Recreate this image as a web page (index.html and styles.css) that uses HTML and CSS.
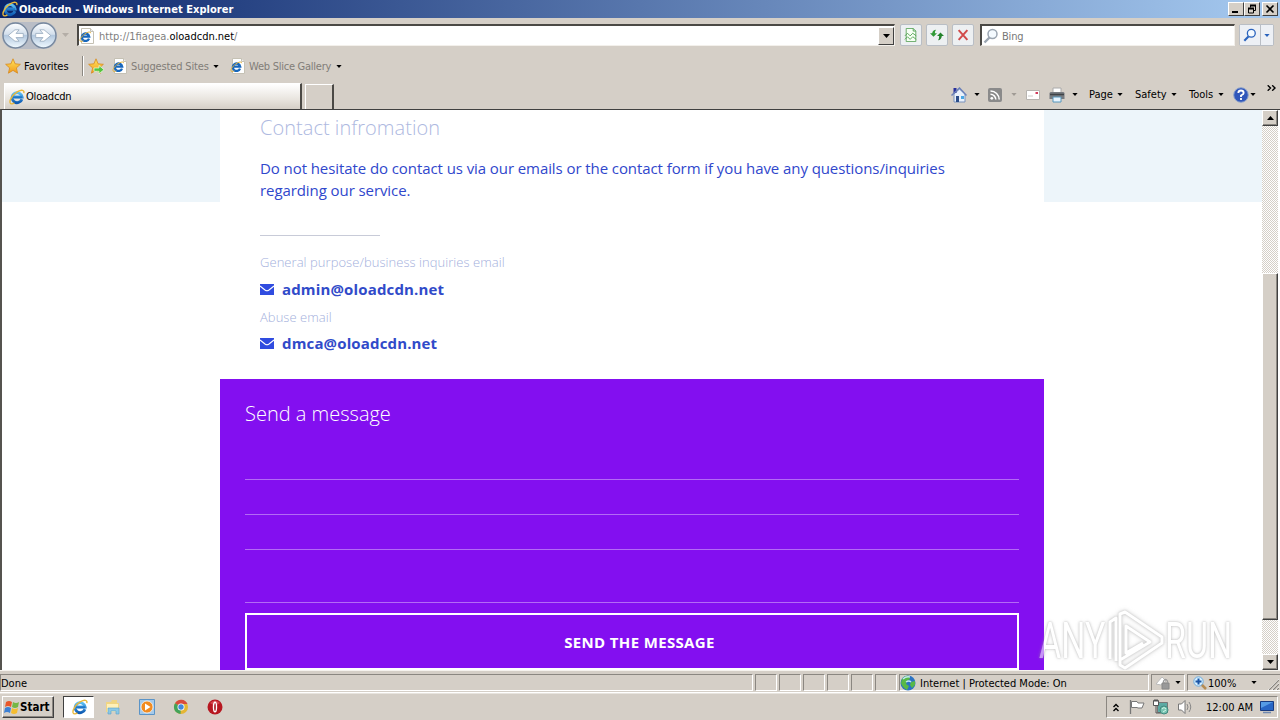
FILE: index.html
```
<!DOCTYPE html>
<html lang="en">
<head>
    <meta charset="UTF-8">
    <meta name="viewport" content="width=device-width, initial-scale=1.0">
    <title>Oloadcdn - Windows Internet Explorer</title>
    <link rel="stylesheet" href="styles.css">
</head>
<body>

    <!-- Shared icons -->
    <svg class="defs">
        <defs>
            <linearGradient id="gBlue" x1="0" y1="0" x2="0" y2="1">
                <stop offset="0" stop-color="#5cc0f5"/>
                <stop offset="1" stop-color="#0f5cb4"/>
            </linearGradient>
            <linearGradient id="gStar" x1="0" y1="0" x2="0" y2="1">
                <stop offset="0" stop-color="#ffe45c"/>
                <stop offset="1" stop-color="#f29a1c"/>
            </linearGradient>
            <linearGradient id="gBall" x1="0" y1="0" x2="0" y2="1">
                <stop offset="0" stop-color="#fdfeff"/>
                <stop offset="0.45" stop-color="#d3dfec"/>
                <stop offset="0.5" stop-color="#b3c8df"/>
                <stop offset="1" stop-color="#f1faff"/>
            </linearGradient>
            <symbol id="ie" viewBox="0 0 16 16">
                <path d="M12.9 10.2a5 5 0 1 1 .2-2.2H5.2" fill="none" stroke="url(#gBlue)" stroke-width="2.9"/>
                <path d="M4 8.3h9" stroke="#1d76c8" stroke-width="1.8"/>
                <path d="M14.8 4.2C15.6.9 12.6.3 8.6 2.7 3.6 5.6.1 11.2 1.2 14c.7 1.5 2.6.9 4.2-.2" fill="none" stroke="#e9b83a" stroke-width="1.4"/>
            </symbol>
            <symbol id="iepage" viewBox="0 0 16 16">
                <path d="M2.500.5h9l3 3v12h-12z" fill="#fff" stroke="#c5c1b4"/>
                <path d="M11.500.5v3h3" fill="#eee" stroke="#c5c1b4"/>
                <path d="M10 10.600a3.700 3.700 0 1 1 .2-2H4" fill="none" stroke="#1767bd" stroke-width="2.300"/>
                <path d="M11.700 5.200c0-2-3-1.400-6 .8C2 8.700.3 12 1.300 13.200c.6.8 1.800.3 3-.4" fill="none" stroke="#e2b13c"/>
            </symbol>
            <symbol id="star" viewBox="0 0 16 16">
                <path d="M8 .8l2.100 5 5.300.5-4 3.600 1.200 5.300L8 12.400l-4.600 2.800 1.200-5.300-4-3.600 5.300-.5z" fill="url(#gStar)" stroke="#d58a22" stroke-width=".8"/>
            </symbol>
            <symbol id="back" viewBox="0 0 26 26">
                <circle cx="13" cy="13" r="12" fill="url(#gBall)" stroke="#76879d" stroke-width="1.300"/>
                <path d="M20.500 11h-7l3-3.500h-4L6 13l6.500 5.500h4l-3-3.500h7z" fill="#fff" stroke="#9aacbf" stroke-width=".8"/>
            </symbol>
            <symbol id="down" viewBox="0 0 7 4">
                <path d="M0 0h7L3.500 4z" fill="currentColor"/>
            </symbol>
            <symbol id="lens" viewBox="0 0 16 16">
                <path d="M6.500 9.500L1.500 14.500" stroke="currentColor" stroke-width="2.400"/>
                <circle cx="9.500" cy="6" r="4.500" fill="#f4faff" stroke="currentColor" stroke-width="1.500"/>
            </symbol>
            <symbol id="mail" viewBox="0 0 14 11">
                <path d="M0 0h14v11H0z" fill="#304ce0"/>
                <path d="M0 2l5.300 4.200Q7 7.300 8.700 6.200L14 2" fill="none" stroke="#fff" stroke-width="1.100"/>
            </symbol>
        </defs>
    </svg>

    <!-- Title bar -->
    <div class="titlebar">
        <svg class="icon16"><use href="#ie"/></svg>
        <span class="title">Oloadcdn - Windows Internet Explorer</span>
        <div class="winbtns">
            <button class="winbtn"><svg viewBox="0 0 12 10"><path d="M2 7h6v2H2z"/></svg></button>
            <button class="winbtn"><svg viewBox="0 0 12 10"><path d="M4 .5h6v2H4zM2 3.500h6v2H2z"/><path d="M4.500 1v2.500M9.500 1v5.500H8M2.500 4v5h5V4" fill="none" stroke="#000"/></svg></button>
            <button class="winbtn close"><svg viewBox="0 0 12 10"><path d="M2.500 1.500l7 7M9.500 1.500l-7 7" stroke="#000" stroke-width="1.600"/></svg></button>
        </div>
    </div>

    <!-- Address bar -->
    <div class="navbar">
        <div class="travel">
            <svg class="ball"><use href="#back"/></svg>
            <svg class="ball forward"><use href="#back"/></svg>
        </div>
        <svg class="arrow recent"><use href="#down"/></svg>
        <div class="address">
            <svg class="icon16"><use href="#iepage"/></svg>
            <span class="url">http://1fiagea.<b>oloadcdn.net</b>/</span>
            <button class="combo"><svg class="arrow"><use href="#down"/></svg></button>
        </div>
        <div class="toolbtns">
            <button class="toolbtn"><svg viewBox="0 0 16 16"><path d="M2.500.500h8l3 3v12h-11z" fill="#f6fff4" stroke="#58a158"/><path d="M10.500.500v3h3M1 9l3-3 3 3 3-3 4 3M1 13l3-3 3 3 3-3 4 3" fill="none" stroke="#4ba04b"/></svg></button>
            <button class="toolbtn"><svg viewBox="0 0 16 16"><path d="M0 6h2.500Q3 2 7 2 5.500 3.500 5.500 6H8l-4 4z" fill="#2f9a35"/><path d="M16 9h-2.500q-.5 4.500-4.500 5 1.500-1.500 1.500-5H8l4-4z" fill="#23822b"/></svg></button>
            <button class="toolbtn"><svg viewBox="0 0 16 16"><path d="M3 2.500l10 11M13 2.500l-10 11" stroke="#d14b4b" stroke-width="2.300"/></svg></button>
        </div>
        <div class="search">
            <svg class="icon16 grey"><use href="#lens"/></svg>
            <span class="hint">Bing</span>
        </div>
        <div class="searchgo">
            <button class="go"><svg class="icon14"><use href="#lens"/></svg></button>
            <button class="more"><svg class="arrow small"><use href="#down"/></svg></button>
        </div>
    </div>

    <!-- Favorites bar -->
    <div class="favbar">
        <svg class="icon16"><use href="#star"/></svg>
        <span class="favlabel">Favorites</span>
        <span class="sep"></span>
        <svg class="icon16 addfav" viewBox="0 0 16 16"><use href="#star"/><path d="M6 10h5V7.500l5 4.200-5 4.100v-2.500H6z" fill="#54c33f" stroke="#e9ffe4" stroke-width=".7"/></svg>
        <svg class="icon16 site"><use href="#iepage"/></svg>
        <span class="link suggested">Suggested Sites</span>
        <svg class="arrow small"><use href="#down"/></svg>
        <svg class="icon16 slice"><use href="#iepage"/></svg>
        <span class="link gallery">Web Slice Gallery</span>
        <svg class="arrow small"><use href="#down"/></svg>
    </div>

    <!-- Tabs and command bar -->
    <div class="tabrow">
        <div class="tab">
            <svg class="icon16"><use href="#ie"/></svg>
            <span>Oloadcdn</span>
        </div>
        <div class="newtab"></div>
        <div class="commands">
            <svg class="icon16" viewBox="0 0 16 16"><path d="M3 7v8h11V7L8.500 2z" fill="#e9f1fb" stroke="#7a93bd"/><path d="M2.500 1h3v5h-3z" fill="#28309c"/><path d="M.5 8.500L8.500 1l7 7.500" fill="none" stroke="#6a80b8" stroke-width="1.500"/><path d="M5 9h3v6H5z" fill="#2b4d89"/><path d="M10 9h3v3h-3z" fill="#4aa7e4"/></svg>
            <svg class="arrow small home"><use href="#down"/></svg>
            <svg class="icon14 rss" viewBox="0 0 14 14"><rect width="14" height="14" rx="2" fill="#8a8a8a"/><circle cx="3.800" cy="10.300" r="1.400" fill="#fff"/><path d="M2.500 6.300a5.300 5.300 0 0 1 5.300 5.300M2.500 2.900a8.700 8.700 0 0 1 8.700 8.700" fill="none" stroke="#fff" stroke-width="1.500"/></svg>
            <svg class="arrow small faded"><use href="#down"/></svg>
            <svg class="readmail" viewBox="0 0 14 10"><path d="M.5.500h13v9H.5z" fill="#fff" stroke="#b7b4b0"/><path d="M9.500 2h2.500v2H9.500z" fill="#d23c5c"/><path d="M2 6h5" stroke="#ccc"/></svg>
            <svg class="icon16 print" viewBox="0 0 16 16"><path d="M4 1h8v6H4z" fill="#fff" stroke="#aaa"/><path d="M.5 6Q1 5 2 5h12q1 0 1.500 1v6H.5z" fill="#777b80"/><path d="M1 7.500h14" stroke="#3f4347" stroke-width="1.500"/><path d="M4 10h8v5H4z" fill="#e8f5ff" stroke="#5796bb"/></svg>
            <svg class="arrow small printarrow"><use href="#down"/></svg>
            <span class="cmd page">Page</span><svg class="arrow small"><use href="#down"/></svg>
            <span class="cmd safety">Safety</span><svg class="arrow small"><use href="#down"/></svg>
            <span class="cmd tools">Tools</span><svg class="arrow small"><use href="#down"/></svg>
            <svg class="icon16 help" viewBox="0 0 16 16"><circle cx="8" cy="8" r="7.300" fill="#2f56ba" stroke="#8ea3cc"/><path d="M5.300 6Q5.500 3.500 8 3.500T10.700 6Q10.700 7.300 8 8.500V10M8 11v2" fill="none" stroke="#fff" stroke-width="1.800"/></svg>
            <svg class="arrow small"><use href="#down"/></svg>
            <svg class="chevrons" viewBox="0 0 9 6"><path d="M.7.300L3.500 3 .7 5.700M5.200.300L8 3 5.200 5.700" fill="none" stroke="#000" stroke-width="1.400"/></svg>
        </div>
    </div>

    <!-- Page -->
    <div class="viewport">
        <div class="content">
            <div class="card">
                <h2>Contact infromation</h2>
                <p class="intro">Do not hesitate do contact us via our emails or the contact form if you have any questions/inquiries<br>regarding our service.</p>
                <hr>
                <p class="label general">General purpose/business inquiries email</p>
                <p class="email"><svg><use href="#mail"/></svg><a>admin@oloadcdn.net</a></p>
                <p class="label abuse">Abuse email</p>
                <p class="email"><svg><use href="#mail"/></svg><a>dmca@oloadcdn.net</a></p>
            </div>
            <form class="message">
                <h2>Send a message</h2>
                <input type="text" class="first">
                <input type="text">
                <input type="text">
                <textarea></textarea>
                <button type="button"><span>SEND THE MESSAGE</span></button>
            </form>
        </div>
        <div class="scrollbar">
            <button class="scrollbtn"><svg class="arrow up"><use href="#down"/></svg></button>
            <div class="thumb"></div>
            <button class="scrollbtn bottom"><svg class="arrow"><use href="#down"/></svg></button>
        </div>
        <div class="watermark">
            <span class="any">ANY</span>
            <svg viewBox="0 0 60 64"><path d="M5 50V13l6-4v43M15 52V5l5-2 37 25v6L20 59l-5-3v-5l30-18L21 17v27l17-10" fill="none" stroke="#fff" stroke-width="3" stroke-linejoin="round"/></svg>
            <span class="run">RUN</span>
        </div>
    </div>

    <!-- Status bar -->
    <div class="status">
        <div class="cell done"><span>Done</span></div>
        <div class="cell"></div>
        <div class="cell"></div>
        <div class="cell"></div>
        <div class="cell"></div>
        <div class="cell"></div>
        <div class="cell"></div>
        <div class="cell zone">
            <svg class="icon16" viewBox="0 0 16 16"><circle cx="8" cy="8" r="7.500" fill="#2b72c3"/><path d="M2 4Q5 0 9 1l1 3-3 2-1 3 3 2-2 4Q2 12 1 8zM11 7l4-1v4l-3 3-2-3z" fill="#58b947"/><path d="M3 4Q6 1 10 2M6 7q3-2 5 0" fill="none" stroke="#c1e9ef" stroke-width="1.500"/></svg>
            <span>Internet | Protected Mode: On</span>
        </div>
        <div class="cell lock">
            <svg class="icon16" viewBox="0 0 16 16"><path d="M1 9l6-7 4 4-5 4z" fill="#fff" stroke="#bbb"/><path d="M7 8h7v6H7z" fill="#999" stroke="#888"/><path d="M8.500 8V6q2-3 4 0v2" fill="none" stroke="#999" stroke-width="1.300"/></svg>
            <svg class="arrow small"><use href="#down"/></svg>
        </div>
        <div class="cell percent">
            <svg class="icon14" viewBox="0 0 14 14"><path d="M8 8l5 5" stroke="#b58c54" stroke-width="2.500"/><circle cx="5.500" cy="5.500" r="4.700" fill="#d5efff" stroke="#6fabdd"/><path d="M5.500 2.500v6M2.500 5.500h6" stroke="#1954a5" stroke-width="2"/></svg>
            <span>100%</span>
            <svg class="arrow small"><use href="#down"/></svg>
            <svg class="grip" viewBox="0 0 12 12"><path d="M1 12L12 1M5 12l7-7M9 12l3-3" stroke="#fff"/><path d="M2 12L12 2M6 12l6-6M10 12l2-2" stroke="#87837c" stroke-width="1.200"/></svg>
        </div>
    </div>

    <!-- Taskbar -->
    <div class="taskbar">
        <button class="start">
            <svg class="icon16" viewBox="0 0 16 16"><path d="M2 3q3-2 6 0L7 8Q4 6 1 8z" fill="#e8572a"/><path d="M9 3q3 2 6 0l-1 5q-3 2-6 0z" fill="#75b744"/><path d="M1 9q3-2 6 0l-1 5q-3-2-6 0z" fill="#3c80d4"/><path d="M8 9q3 2 6 0l-1 5q-3 2-6 0z" fill="#f5bd30"/></svg>
            <span>Start</span>
        </button>
        <div class="task active"><svg class="icon16"><use href="#ie"/></svg></div>
        <svg class="icon16 explorer" viewBox="0 0 16 16"><path d="M1 3h5l1-2h5v3h2v9H1z" fill="#f0d583"/><path d="M2 5h11v8H2z" fill="#fff0b8"/><path d="M3 15V9h11v6h-3v-3H6v3z" fill="#8cc8e6" stroke="#57a1cb" stroke-width=".6"/></svg>
        <svg class="icon16 player" viewBox="0 0 16 16"><path d="M.5.500h15v15H.5z" fill="#a5caea" stroke="#5b94c7"/><circle cx="8" cy="8" r="6" fill="#f18b20" stroke="#fff" stroke-width=".7"/><path d="M6 4.500v7L11.500 8z" fill="#fff"/></svg>
        <svg class="icon16 chrome" viewBox="0 0 16 16"><circle cx="8" cy="8" r="7" fill="#e5b634"/><path d="M8 8L2 4.300A7 7 0 0 1 14.500 5H8z" fill="#d94b3d"/><path d="M8 8l-.5 7A7 7 0 0 1 2 4.300z" fill="#43a35a"/><circle cx="8" cy="8" r="3.500" fill="#fff"/><circle cx="8" cy="8" r="2.700" fill="#4388dc"/></svg>
        <svg class="icon16 opera" viewBox="0 0 16 16"><circle cx="8" cy="8" r="7.500" fill="#b71720"/><path d="M3 4Q8-1 13 4L8 7z" fill="#d5454d"/><ellipse cx="8" cy="8" rx="1.500" ry="4.800" fill="#a30c16" stroke="#fff" stroke-width="1.400"/></svg>
        <div class="tray">
            <svg class="hidden-icons" viewBox="0 0 6 9"><path d="M.5 4L3 1.500 5.500 4M.5 8L3 5.500 5.500 8" fill="none" stroke="#000" stroke-width="1.400"/></svg>
            <svg class="icon16 flag" viewBox="0 0 16 16"><path d="M1.500 1v14" stroke="#777" stroke-width="1.300"/><path d="M2.500 2.500H8l1 1.500h6l-2 5H9L8 8.500H2.500z" fill="#fff" stroke="#777"/></svg>
            <svg class="icon16 net" viewBox="0 0 16 16"><path d="M4.500 3.500h10v10h-10z" fill="#5caaa4" stroke="#777"/><path d="M.5 1.500h5v5h-5z" fill="#fff" stroke="#555"/><path d="M2 0v3M4 0v3M3 7v7h5" fill="none" stroke="#555"/><circle cx="11" cy="11" r="4" fill="#79c5b3" stroke="#40887e"/><path d="M9 10q2-3 4 0M10 13l3-2" fill="none" stroke="#d5f7e8"/></svg>
            <svg class="icon16 sound" viewBox="0 0 16 16"><path d="M1.500 5h3L8 1.500v13L4.500 11h-3z" fill="#fff" stroke="#777"/><path d="M10 5q2 3 0 6M12 3q3.500 5 0 10" fill="none" stroke="#888"/></svg>
            <span class="clock">12:00 AM</span>
            <svg class="icon14 desk" viewBox="0 0 14 14"><path d="M.5 1.500h13v9H.5z" fill="#2866c5" stroke="#183b80"/><path d="M1 2h12L1 8z" fill="#559be5"/><path d="M3 12.500h8" stroke="#7089b0" stroke-width="1.500"/></svg>
        </div>
    </div>

</body>
</html>
```
FILE: styles.css
```
* {
    box-sizing: border-box;
}

body {
    margin: 0;
    width: 1280px;
    height: 720px;
    overflow: hidden;
    display: flex;
    flex-direction: column;
    background-color: #d5cfc7;
    font-family: "DejaVu Sans Condensed", "DejaVu Sans", sans-serif;
    font-stretch: condensed;
    font-size: 11px;
    color: #000;
}

button {
    padding: 0;
    font: inherit;
    color: inherit;
}

svg {
    display: block;
    flex: none;
}

span {
    white-space: nowrap;
}

.defs {
    position: absolute;
    width: 0;
    height: 0;
}

.icon16 {
    width: 16px;
    height: 16px;
}

.icon14 {
    width: 14px;
    height: 14px;
}

.arrow {
    width: 7px;
    height: 4px;
}

.arrow.small {
    width: 6px;
    height: 3px;
}

/* Title bar */
.titlebar {
    height: 18px;
    display: flex;
    align-items: center;
    padding: 0 2px;
    background: linear-gradient(to right, #0a246a, #a6caf0);
    color: #fff;
}

.title {
    margin-left: 1px;
    font-weight: bold;
    letter-spacing: 0.04px;
}

.winbtns {
    margin-left: auto;
    display: flex;
}

.winbtn {
    width: 16px;
    height: 14px;
    display: flex;
    align-items: center;
    justify-content: center;
    background-color: #d5cfc7;
    border: 1px solid;
    border-color: #fff #404040 #404040 #fff;
}

.winbtn svg {
    width: 12px;
    height: 10px;
}

.winbtn.close {
    margin-left: 2px;
}

/* Address bar */
.navbar {
    height: 34px;
    display: flex;
    align-items: center;
    padding-left: 2px;
}

.travel {
    display: flex;
    gap: 1px;
    background-color: #b9bdc6;
    border-radius: 13px;
}

.ball {
    width: 27px;
    height: 27px;
}

.forward {
    transform: scaleX(-1);
}

.recent {
    margin-left: 5px;
    color: #b4aea7;
}

.address {
    margin-left: 8px;
    width: 818px;
    height: 22px;
    display: flex;
    align-items: center;
    background-color: #fff;
    border: 1px solid #f3f0eb;
    border-top: 2px solid #4b4945;
    border-left: 2px solid #4b4945;
}

.url {
    margin-left: 4px;
    padding-top: 1px;
    color: #808080;
}

.url b {
    font-weight: normal;
    color: #000;
}

.combo {
    margin-left: auto;
    width: 16px;
    height: 18px;
    display: flex;
    align-items: center;
    justify-content: center;
    background-color: #d5cfc7;
    border: 1px solid;
    border-color: #fff #404040 #404040 #fff;
}

.toolbtns {
    margin-left: 5px;
    display: flex;
    gap: 4px;
}

.toolbtn {
    width: 22px;
    height: 22px;
    display: flex;
    align-items: center;
    justify-content: center;
    background-color: #edf0f2;
    border: 1px solid #b9bec5;
    border-radius: 2px;
}

.toolbtn svg {
    width: 14px;
    height: 14px;
}

.search {
    margin-left: 6px;
    width: 255px;
    height: 22px;
    display: flex;
    align-items: center;
    padding-left: 1px;
    background-color: #fff;
    border: 1px solid #f3f0eb;
    border-top: 2px solid #4b4945;
    border-left: 2px solid #4b4945;
}

.grey {
    color: #9ba5b1;
}

.hint {
    margin-left: 3px;
    padding-top: 1px;
    color: #777;
    letter-spacing: -0.2px;
}

.searchgo {
    margin-left: 4px;
    display: flex;
    height: 22px;
    border: 1px solid #b9bec5;
    border-radius: 2px;
    color: #2a63bd;
}

.go, .more {
    display: flex;
    align-items: center;
    justify-content: center;
    background-color: #edf0f5;
    border: none;
}

.go {
    width: 21px;
    border-right: 1px solid #b9bec5;
}

.more {
    width: 12px;
}

/* Favorites bar */
.favbar {
    height: 28px;
    display: flex;
    align-items: center;
    padding-left: 5px;
}

.favlabel {
    margin-left: 3px;
    width: 58px;
}

.sep {
    width: 2px;
    height: 20px;
    border-left: 1px solid #8b8781;
    border-right: 1px solid #fff;
}

.addfav {
    margin-left: 4px;
}

.site {
    margin-left: 8px;
}

.link {
    margin-left: 3px;
    padding-top: 1px;
    color: #817d78;
    letter-spacing: -0.15px;
}

.suggested {
    width: 82px;
}

.slice {
    margin-left: 11px;
}

.gallery {
    width: 87px;
    letter-spacing: -0.25px;
}

/* Tabs */
.tabrow {
    height: 29px;
    display: flex;
    padding-left: 4px;
}

.tab {
    margin-top: 3px;
    width: 298px;
    display: flex;
    align-items: center;
    padding-left: 4px;
    background: linear-gradient(#fff, #e9e5df 60%, #d5cfc7);
    border-top: 1px solid #fff;
    border-left: 1px solid #fff;
    border-right: 2px solid #4b4945;
}

.tab span {
    margin-left: 1px;
    letter-spacing: -0.2px;
}

.newtab {
    margin-top: 4px;
    margin-left: 3px;
    width: 29px;
    border-top: 1px solid #fff;
    border-left: 1px solid #fff;
    border-right: 2px solid #4b4945;
}

.commands {
    margin-left: 617px;
    display: flex;
    align-items: center;
}

.home {
    margin-left: 7px;
}

.rss {
    margin-left: 8px;
}

.rss + .arrow {
    margin-left: 9px;
}

.faded {
    color: #a09b95;
}

.readmail {
    margin-left: 9px;
    width: 14px;
    height: 10px;
}

.print {
    margin-left: 9px;
}

.printarrow {
    margin-left: 7px;
}

.page {
    margin-left: 11px;
    width: 28px;
}

.safety {
    margin-left: 12px;
    width: 36px;
}

.tools {
    margin-left: 12px;
    width: 29px;
}

.help {
    margin-left: 9px;
}

.help + .arrow {
    margin-left: 1px;
}

.chevrons {
    margin-left: 11px;
    margin-bottom: 13px;
    width: 9px;
    height: 6px;
}

/* Page */
.viewport {
    position: relative;
    height: 561px;
    display: flex;
    background-color: #fff;
    border-top: 1px solid #404040;
    border-left: 2px solid #55534f;
    overflow: hidden;
}

.content {
    width: 1260px;
    background: linear-gradient(#edf5fa, #edf5fa) no-repeat;
    background-size: 100% 92px;
    padding-left: 218px;
    font-family: "Open Sans", sans-serif;
    font-stretch: normal;
}

.card {
    width: 824px;
    height: 269px;
    padding: 4px 40px 0;
    background-color: #fff;
}

.content h2 {
    margin: 0;
    font-size: 20px;
    line-height: 28px;
    font-weight: 300;
}

.card h2 {
    color: #aeb9df;
    letter-spacing: 0.03px;
}

.intro {
    margin: 15px 0 34px;
    font-size: 15px;
    line-height: 22px;
    color: #3047cc;
    white-space: nowrap;
    letter-spacing: -0.08px;
}

.card hr {
    width: 120px;
    height: 1px;
    margin: 0;
    border: none;
    background-color: #c8cbd8;
}

.label {
    margin: 16px 0 0;
    font-size: 13px;
    line-height: 20px;
    font-weight: 300;
    color: #a4b0dc;
    letter-spacing: 0.05px;
}

.label.abuse {
    margin-top: 8px;
}

.email {
    margin: 7px 0 0;
    height: 20px;
    display: flex;
    align-items: center;
    font-size: 15px;
    font-weight: bold;
    color: #304ac9;
    letter-spacing: 0.15px;
}

.label.abuse + .email {
    margin-top: 6px;
}

.email svg {
    width: 14px;
    height: 11px;
    margin-top: 1px;
    margin-right: 8px;
}

.message {
    width: 824px;
    height: 291px;
    padding: 21px 25px 0;
    display: flex;
    flex-direction: column;
    background-color: #830ff0;
    color: #fff;
}

.message input, .message textarea {
    width: 100%;
    height: 35px;
    flex: none;
    padding: 0;
    background: none;
    border: none;
    border-bottom: 1px solid #b36af5;
    resize: none;
}

.message .first {
    margin-top: 17px;
}

.message textarea {
    height: 53px;
}

.message button {
    height: 57px;
    flex: none;
    margin-top: 10px;
    padding-left: 15px;
    background: none;
    border: 2px solid #fff;
    font-size: 15px;
    font-weight: 700;
    letter-spacing: 0.35px;
}

/* Scrollbar */
.scrollbar {
    width: 16px;
    display: flex;
    flex-direction: column;
    background: repeating-conic-gradient(#fff 0 25%, #d5cfc7 0 50%) 0 0 / 2px 2px;
}

.scrollbtn, .thumb {
    background-color: #d5cfc7;
    border: 1px solid;
    border-color: #fff #404040 #404040 #fff;
    box-shadow: inset -1px -1px #8b8781;
}

.scrollbtn {
    height: 16px;
    display: flex;
    align-items: center;
    justify-content: center;
}

.up {
    transform: scaleY(-1);
}

.thumb {
    margin-top: 147px;
    height: 347px;
}

.scrollbtn.bottom {
    margin-top: auto;
}

/* Recorder mark over the page */
.watermark {
    position: absolute;
    left: 1037px;
    top: 499px;
    display: flex;
    align-items: center;
    opacity: 0.55;
    font-family: Roboto, sans-serif;
    font-stretch: normal;
    font-size: 50px;
    line-height: 64px;
    color: #fff;
    text-shadow: 0 0 2px #999, 0 0 4px #999;
}

.watermark svg {
    width: 60px;
    height: 64px;
    margin-left: 2px;
    filter: drop-shadow(0 0 1px #999) drop-shadow(0 0 2px #bbb);
}

.watermark .any {
    width: 64px;
}

.watermark span {
    display: block;
}

.any, .run {
    transform: scaleX(0.68);
    transform-origin: left;
}

/* Status bar */
.status {
    height: 23px;
    display: flex;
    padding: 3px 0 1px;
    gap: 2px;
    border-top: 1px solid #f6f3ee;
    border-bottom: 1px solid #fff;
}

.cell {
    width: 22px;
    display: flex;
    align-items: center;
    border: 1px solid;
    border-color: #8b8781 #fff #fff #8b8781;
}

.cell span {
    padding-top: 1px;
}

.done {
    width: 753px;
}

.zone {
    width: 250px;
}

.zone span {
    margin-left: 4px;
}

.lock {
    width: 34px;
    padding-left: 3px;
}

.lock .arrow {
    margin-left: 4px;
}

.percent {
    width: 93px;
    padding-left: 5px;
    border-right: none;
}

.percent span {
    width: 43px;
    margin-left: 1px;
}

.grip {
    width: 12px;
    height: 12px;
    margin-left: 10px;
    align-self: flex-end;
}

/* Taskbar */
.taskbar {
    height: 27px;
    display: flex;
    align-items: center;
    padding-left: 2px;
    border-top: 1px solid #e8e4de;
}

.start {
    width: 52px;
    height: 22px;
    display: flex;
    align-items: center;
    padding-left: 1px;
    background-color: #d5cfc7;
    border: 1px solid;
    border-color: #fff #404040 #404040 #fff;
    box-shadow: inset -1px -1px #8b8781;
    font-weight: bold;
    font-size: 11.5px;
}

.task {
    margin-left: 9px;
    width: 31px;
    height: 22px;
    display: flex;
    align-items: center;
    justify-content: center;
    background-color: #fff;
    border: 1px solid;
    border-color: #404040 #fff #fff #404040;
}

.task svg {
    margin-left: 2px;
}

.explorer {
    margin-left: 11px;
}

.player, .chrome, .opera {
    margin-left: 18px;
}

.tray {
    margin-left: auto;
    margin-right: 2px;
    width: 172px;
    height: 22px;
    display: flex;
    align-items: center;
    padding-left: 6px;
    border: 1px solid;
    border-color: #8b8781 #fff #fff #8b8781;
}

.hidden-icons {
    width: 6px;
    height: 9px;
}

.flag {
    margin-left: 10px;
}

.net {
    margin-left: 8px;
}

.sound {
    margin-left: 8px;
}

.clock {
    margin-left: 13px;
    width: 54px;
}
```
